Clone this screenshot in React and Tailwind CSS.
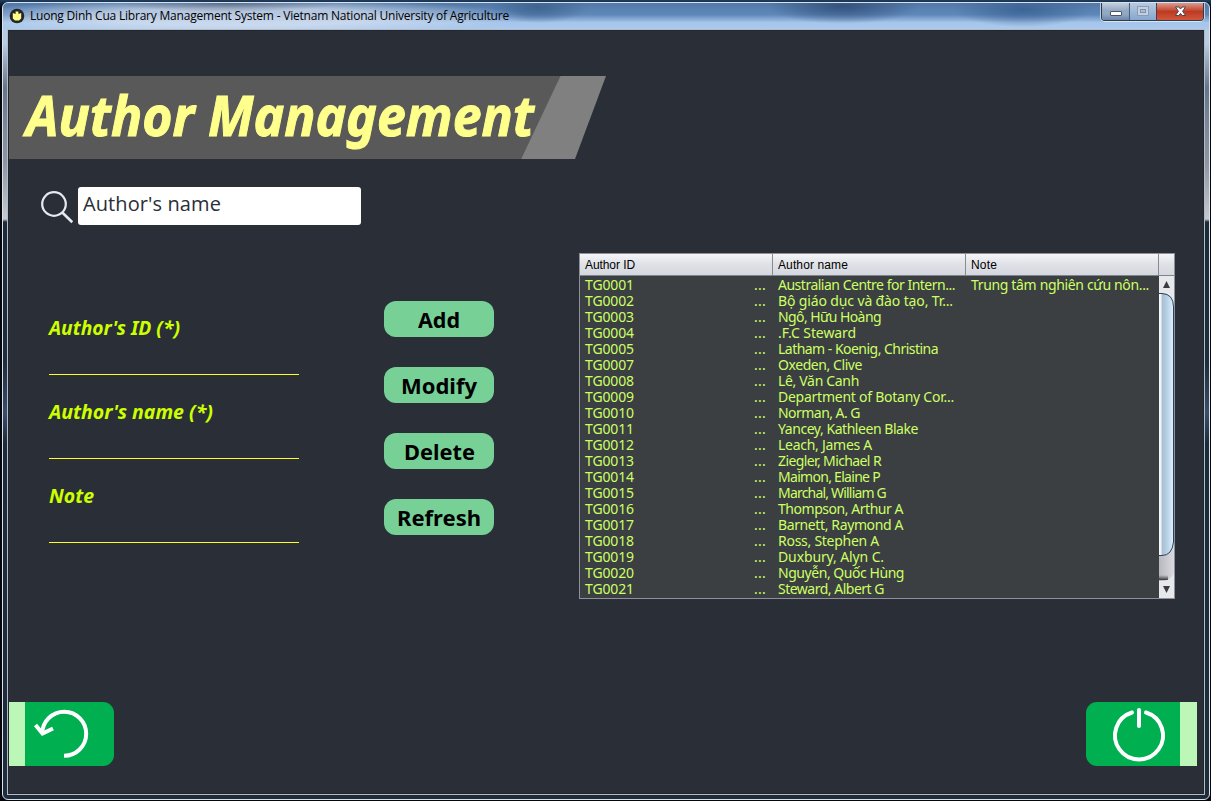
import React, { useLayoutEffect, useRef, useState } from "react";

/* Text set to a given width, by tracking or by horizontal scaling. */
function Fit({ w, stretch = false, className = "", children }) {
  const ref = useRef(null);
  const [style, setStyle] = useState({});
  useLayoutEffect(() => {
    const natural = ref.current.getBoundingClientRect().width;
    const count = String(children).length;
    setStyle(
      stretch
        ? { transform: `scaleX(${w / natural})` }
        : { letterSpacing: `${(w - natural) / count}px` }
    );
  }, []);
  return (
    <span
      ref={ref}
      style={style}
      className={"inline-block origin-left whitespace-pre " + className}
    >
      {children}
    </span>
  );
}

const rows = [
  ["TG0001", "Australian Centre for Intern...", 177, "Trung tâm nghiên cứu nôn..."],
  ["TG0002", "Bộ giáo dục và đào tạo, Tr...", 175],
  ["TG0003", "Ngô, Hữu Hoàng", 103],
  ["TG0004", ".F.C Steward", 78],
  ["TG0005", "Latham - Koenig, Christina", 160],
  ["TG0007", "Oxeden, Clive", 84],
  ["TG0008", "Lê, Văn Canh", 81],
  ["TG0009", "Department of Botany Cor...", 176],
  ["TG0010", "Norman, A. G", 82],
  ["TG0011", "Yancey, Kathleen Blake", 140],
  ["TG0012", "Leach, James A", 94],
  ["TG0013", "Ziegler, Michael R", 103],
  ["TG0014", "Maimon, Elaine P", 102],
  ["TG0015", "Marchal, William G", 108],
  ["TG0016", "Thompson, Arthur A", 125],
  ["TG0017", "Barnett, Raymond A", 125],
  ["TG0018", "Ross, Stephen A", 101],
  ["TG0019", "Duxbury, Alyn C.", 106],
  ["TG0020", "Nguyễn, Quốc Hùng", 126],
  ["TG0021", "Steward, Albert G", 106],
];

function TitleBar() {
  return (
    <div className="flex h-[26px] shrink-0 overflow-hidden rounded-t-[5px] bg-[radial-gradient(ellipse_110px_9px_at_225px_0px,rgba(75,90,115,0.7),transparent),radial-gradient(ellipse_290px_18px_at_235px_14px,rgba(212,222,238,0.75)_50%,transparent_100%),radial-gradient(ellipse_50px_16px_at_535px_4px,#3f648f,transparent),radial-gradient(ellipse_75px_18px_at_840px_3px,#34527d,transparent),radial-gradient(ellipse_70px_18px_at_1020px_6px,#3c6496,transparent),linear-gradient(180deg,#5279a8_0%,#5f88b9_45%,#a5c5ea_75%,#a9caee_100%)]">
      <svg className="mt-[5px] ml-[6px] h-4 w-4" viewBox="0 0 16 16">
        <circle cx="8" cy="8" r="7.3" fill="#24262c" />
        <path d="M3.8 5 6.6 6V3.6h2.8V6l2.8-1v5.5L10 12.6H6l-2.2-2.1z" fill="#ffff85" />
      </svg>
      <div className="ml-[5px] flex-1 pt-[5px] font-['Open_Sans',sans-serif] text-[12px] leading-[16px] text-black">
        <Fit w={479}>
          Luong Dinh Cua Library Management System - Vietnam National University of Agriculture
        </Fit>
      </div>
      <div className="mr-[5px] flex h-[18px] w-[103px] overflow-hidden rounded-b-[4px] border border-t-0 border-[#303b4b] ring-1 ring-white/60">
        <div className="flex w-[28px] justify-center border-r border-[#4c5e75] bg-linear-to-b from-[#c3cfdd] via-[#93a9c3] via-45% to-[#9db5d0] pt-[8px] shadow-[inset_0_-6px_5px_-3px_#6681a3]">
          <div className="h-[5px] w-[12px] rounded-[1px] border border-[#4c5463] bg-white" />
        </div>
        <div className="flex w-[27px] justify-center border-r border-[#4f3a4a] bg-linear-to-b from-[#b7cae0] to-[#86a7cf] pt-[3px]">
          <div className="flex h-[10px] w-[12px] items-center justify-center border border-[#8a9db5] bg-[#c2d0e0]">
            <div className="h-[4px] w-[6px] border border-[#7d92ad] bg-[#a8bdd5]" />
          </div>
        </div>
        <div className="flex flex-1 justify-center bg-linear-to-b from-[#dc9a8e] from-0% via-[#bd3a22] via-50% to-[#d0573c] pt-[3px]">
          <svg className="h-[11px] w-[13px]" viewBox="0 0 13 11">
            <path d="M1.5 1h3.3l1.7 2 1.7-2h3.3L8.6 5.3l3 4.2H8.2L6.5 7.4 4.8 9.5H1.4l3-4.2z" fill="#fff" stroke="#4a4453" strokeWidth="1" />
          </svg>
        </div>
      </div>
    </div>
  );
}

function Banner() {
  return (
    <div className="relative ml-px mt-[46px] h-[83px] w-[597px]">
      <svg className="absolute inset-0 h-full w-full" viewBox="0 0 597 83">
        <path d="M0 0H552L512 83H0z" fill="#595959" />
        <path d="M551.5 0H597L566 83H512z" fill="#808080" />
      </svg>
      <h1 className="relative pl-[17px] pt-[3px] font-['Noto_Sans',sans-serif] text-[55px] leading-[72px] font-bold text-[#ffff8b] italic [-webkit-text-stroke:1px_#ffff8b]">
        <Fit w={508} stretch>
          Author Management
        </Fit>
      </h1>
    </div>
  );
}

function Field({ label, w }) {
  return (
    <label className="flex h-[84px] flex-col justify-between border-b border-[#ffff1e] font-['Noto_Sans',sans-serif] text-[19.5px] leading-[28px] font-bold text-[#ccff00] italic">
      <span className="pt-[23px]">
        <Fit w={w} stretch>
          {label}
        </Fit>
      </span>
    </label>
  );
}

function Action({ label, w }) {
  return (
    <button className="flex h-9 w-[110px] justify-center rounded-[12px] bg-[#77d197] pt-[3px] font-['Noto_Sans',sans-serif] text-[22px] leading-[30px] font-bold text-black">
      <span className="flex" style={{ width: w }}>
        <Fit w={w} stretch>
          {label}
        </Fit>
      </span>
    </button>
  );
}

function HeadCell({ children, w }) {
  return (
    <div className="w-[193px] border-r border-[#858a93] pl-[5px] leading-[22px]">
      <Fit w={w}>{children}</Fit>
    </div>
  );
}

function Scrollbar() {
  return (
    <div className="flex w-[15px] flex-col bg-[#d0d0d6]">
      <svg className="h-full w-full" viewBox="0 0 15 322" preserveAspectRatio="none">
        <defs>
          <linearGradient id="track"><stop offset="0" stopColor="#b7b7be" /><stop offset="1" stopColor="#dadae0" /></linearGradient>
          <linearGradient id="thumb"><stop offset="0" stopColor="#fdfeff" /><stop offset=".18" stopColor="#eef3f8" /><stop offset=".28" stopColor="#a9bfd3" /><stop offset=".6" stopColor="#b9d2e6" /><stop offset="1" stopColor="#dff3ff" /></linearGradient>
          <linearGradient id="shade" x2="0" y2="1"><stop offset="0" stopColor="#555" stopOpacity="0" /><stop offset="1" stopColor="#333" /></linearGradient>
        </defs>
        <rect width="15" height="322" fill="url(#track)" />
        <rect y="299" width="9" height="5" fill="url(#shade)" />
        <path d="M0 0H15V28Q12 17 3 17H0z" fill="#e6e8ec" />
        <path d="M-1 17.5H3Q14.5 18 14.5 31V266Q13 279.5 3 279.5H-1z" fill="url(#thumb)" stroke="#2c4258" />
        <path d="M0 322V305H4Q12 304 15 297V322z" fill="#e6e8ec" />
        <path d="M7.5 5 11 12H4z" fill="#3c3c40" />
        <path d="M7.5 317 11 310H4z" fill="#3c3c40" />
      </svg>
    </div>
  );
}

function AuthorTable() {
  return (
    <div className="mt-[28px] ml-[85px] flex h-[346px] w-[596px] flex-col border border-[#8c919b] bg-[#3c3f41]">
      <div className="flex h-[22px] shrink-0 border-b border-[#7f848c] bg-linear-to-b from-[#f6f6f9] via-[#dfe1e6] via-50% to-[#d5d8df] font-['Liberation_Sans',Arial,sans-serif] text-[12px] text-black">
        <HeadCell w={50}>Author ID</HeadCell>
        <HeadCell w={70}>Author name</HeadCell>
        <HeadCell w={26}>Note</HeadCell>
      </div>
      <div className="flex flex-1">
        <div className="flex flex-1 flex-col pt-px font-['Noto_Sans',sans-serif] text-[14px] leading-[16px] text-[#ccff66]">
          {rows.map(([id, name, w, note]) => (
            <div key={id} className="flex h-4">
              <div className="flex w-[193px] justify-between pr-[7px] pl-[5px]">
                <Fit w={49}>{id}</Fit>
                <Fit w={12}>...</Fit>
              </div>
              <div className="w-[193px] pl-[5px]">
                <Fit w={w}>{name}</Fit>
              </div>
              <div className="w-[193px] pl-[5px]">{note && <Fit w={178}>{note}</Fit>}</div>
            </div>
          ))}
        </div>
        <Scrollbar />
      </div>
    </div>
  );
}

export default function App() {
  return (
    <div className="flex h-[801px] w-[1211px] overflow-hidden bg-linear-to-b from-[#203f63] from-0% to-[#05070c] to-1% pt-[2px] pr-px pb-px pl-[2px]">
      <div className="flex flex-1 flex-col rounded-[6px] border border-[#dbe3ea] bg-[linear-gradient(180deg,#a9caee_0,#b9cde3_40px,#67758a_85px,#7b8798_120px,#8e96a2_160px,#c6c9cf_216px,#1d2a3a_219px,#1e2c3c_360px,#3b4f6b_410px,#1d2a3a_440px,#1e2c3c_100%)]">
        <TitleBar />
        <main className="mx-1 mb-1 flex flex-1 flex-col border border-[#b3bcc6] bg-[#2a2e37] shadow-[inset_0_0_0_1px_#22262e]">
          <Banner />
          <div className="mt-[28px] ml-[31px] flex h-[38px]">
            <svg className="mt-[3px] h-[34px] w-[39px]" viewBox="0 0 39 34" fill="none" stroke="#e6eaf0" strokeWidth="2.2">
              <circle cx="15" cy="14" r="11.8" />
              <path d="m23.3 22.5 10 9.7" strokeWidth="2.6" />
            </svg>
            <div className="w-[283px] rounded-[3px] bg-white pt-[2px] pl-[5px] font-['Open_Sans',sans-serif] text-[20px] leading-[30px] text-[#2a2e37]">
              <Fit w={138}>Author&apos;s name</Fit>
            </div>
          </div>
          <div className="flex">
            <form className="ml-[41px] mt-[66px] w-[250px]">
              <Field label="Author's ID (*)" w={131} />
              <Field label="Author's name (*)" w={164} />
              <Field label="Note" w={45} />
            </form>
            <div className="mt-[76px] ml-[85px] flex flex-col gap-[30px]">
              <Action label="Add" w={42} />
              <Action label="Modify" w={76} />
              <Action label="Delete" w={71} />
              <Action label="Refresh" w={84} />
            </div>
            <AuthorTable />
          </div>
          <footer className="mt-auto mb-[28px] flex h-16 justify-between pr-[7px] pl-px">
            <button className="h-16 w-[105px] overflow-hidden rounded-r-[11px] border-l-16 border-[#bcf7b7] bg-[#00b050]">
              <svg className="h-16 w-[89px]" viewBox="0 0 89 64" fill="none" stroke="#fff" strokeWidth="4">
                <path d="M17.2 31.5A22 22 0 1 1 39 53.8" />
                <path d="m10.5 23 7 8.5 10.5-5" />
              </svg>
            </button>
            <button className="h-16 w-[111px] overflow-hidden rounded-l-[11px] border-r-17 border-[#bcf7b7] bg-[#00b050]">
              <svg className="h-16 w-[94px]" viewBox="0 0 94 64" fill="none" stroke="#fff" strokeWidth="4" strokeLinecap="round">
                <path d="M46 10.5A24 24 0 1 0 60 10.5M53 8v16" />
              </svg>
            </button>
          </footer>
        </main>
      </div>
    </div>
  );
}
